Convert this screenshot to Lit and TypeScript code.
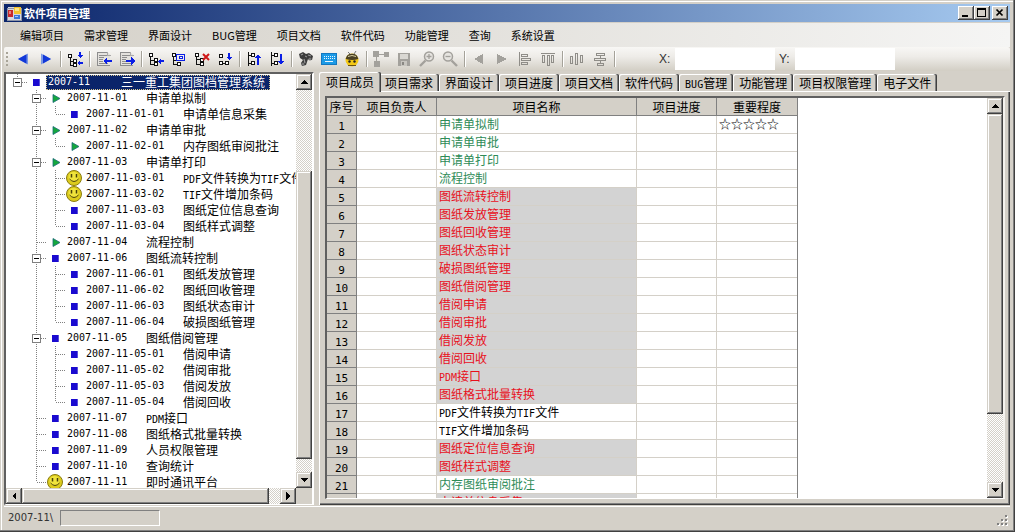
import { LitElement, html, svg, css, nothing, TemplateResult } from "lit";
import { customElement, state } from "lit/decorators.js";
import { classMap } from "lit/directives/class-map.js";
import { styleMap } from "lit/directives/style-map.js";

type Mark = "square" | "arrow" | "smiley";

interface TreeItem {
  code: string;
  name: string;
  mark: Mark;
  children?: TreeItem[];
}

const leaf = (code: string, name: string, mark: Mark = "square"): TreeItem => ({ code, name, mark });

const TREE: TreeItem = {
  code: "2007-11", name: "三一重工集团图档管理系统", mark: "square",
  children: [
    { code: "2007-11-01", name: "申请单拟制", mark: "arrow", children: [leaf("2007-11-01-01", "申请单信息采集")] },
    { code: "2007-11-02", name: "申请单审批", mark: "arrow", children: [leaf("2007-11-02-01", "内存图纸审阅批注", "arrow")] },
    {
      code: "2007-11-03", name: "申请单打印", mark: "arrow", children: [
        leaf("2007-11-03-01", "PDF文件转换为TIF文件", "smiley"),
        leaf("2007-11-03-02", "TIF文件增加条码", "smiley"),
        leaf("2007-11-03-03", "图纸定位信息查询"),
        leaf("2007-11-03-04", "图纸样式调整"),
      ],
    },
    leaf("2007-11-04", "流程控制", "arrow"),
    {
      code: "2007-11-06", name: "图纸流转控制", mark: "square", children: [
        leaf("2007-11-06-01", "图纸发放管理"),
        leaf("2007-11-06-02", "图纸回收管理"),
        leaf("2007-11-06-03", "图纸状态审计"),
        leaf("2007-11-06-04", "破损图纸管理"),
      ],
    },
    {
      code: "2007-11-05", name: "图纸借阅管理", mark: "square", children: [
        leaf("2007-11-05-01", "借阅申请"),
        leaf("2007-11-05-02", "借阅审批"),
        leaf("2007-11-05-03", "借阅发放"),
        leaf("2007-11-05-04", "借阅回收"),
      ],
    },
    leaf("2007-11-07", "PDM接口"),
    leaf("2007-11-08", "图纸格式批量转换"),
    leaf("2007-11-09", "人员权限管理"),
    leaf("2007-11-10", "查询统计"),
    leaf("2007-11-11", "即时通讯平台", "smiley"),
  ],
};

const MENUS = ["编辑项目", "需求管理", "界面设计", "BUG管理", "项目文档", "软件代码", "功能管理", "查询", "系统设置"];

const TABS = ["项目成员", "项目需求", "界面设计", "项目进度", "项目文档", "软件代码", "BUG管理", "功能管理", "项目权限管理", "电子文件"];

type Tone = "started" | "pending" | "plain";
const ROWS: { name: string; tone: Tone; stars?: string }[] = [
  { name: "申请单拟制", tone: "started", stars: "☆☆☆☆☆" },
  { name: "申请单审批", tone: "started" },
  { name: "申请单打印", tone: "started" },
  { name: "流程控制", tone: "started" },
  { name: "图纸流转控制", tone: "pending" },
  { name: "图纸发放管理", tone: "pending" },
  { name: "图纸回收管理", tone: "pending" },
  { name: "图纸状态审计", tone: "pending" },
  { name: "破损图纸管理", tone: "pending" },
  { name: "图纸借阅管理", tone: "pending" },
  { name: "借阅申请", tone: "pending" },
  { name: "借阅审批", tone: "pending" },
  { name: "借阅发放", tone: "pending" },
  { name: "借阅回收", tone: "pending" },
  { name: "PDM接口", tone: "pending" },
  { name: "图纸格式批量转换", tone: "pending" },
  { name: "PDF文件转换为TIF文件", tone: "plain" },
  { name: "TIF文件增加条码", tone: "plain" },
  { name: "图纸定位信息查询", tone: "pending" },
  { name: "图纸样式调整", tone: "pending" },
  { name: "内存图纸审阅批注", tone: "started" },
  { name: "申请单信息采集", tone: "pending" },
];

// Latin runs are set in a half-width face so that they keep the grid of the Chinese text.
const mixed = (text: string) =>
  text.split(/([A-Za-z0-9-]+)/).filter(Boolean)
    .map((part) => (/^[A-Za-z0-9-]/.test(part) ? html`<span class="half">${part}</span>` : part));

/* ---------- icons ---------- */

const BLUE = "#0a1ee6";
const box = (x: number, y: number, c = "#111") =>
  svg`<rect x=${x + 0.5} y=${y + 0.5} width="3" height="3" fill="#fff" stroke=${c}/>`;
const arrowLeft = (x: number, y: number) =>
  svg`<path d="M${x} ${y}l4-4v3h5v2h-5v3z" fill=${BLUE}/>`;
const arrowRight = (x: number, y: number) =>
  svg`<path d="M${x} ${y}l-4-4v3h-5v2h5v3z" fill=${BLUE}/>`;
const page = svg`
  <path d="M1 1h10l3 3v11H1z" fill="#e4e2de"/>
  <path d="M1.5 15V1.5H11M3 4.5h8M3 6.5h5M3 8.5h4M3 10.5h4M3 12.5h9M1 14.5h13" fill="none" stroke="#8d8d8d"/>
  <path d="M11.5 1v3.500h3" fill="none" stroke="#aaa"/>`;
const GREY = "#a3a19c";

const GLYPHS: Record<string, TemplateResult | ReturnType<typeof svg>> = {
  back: svg`<g shape-rendering="auto"><path d="M3 8l10-5.500v11z" fill="#7c98e4"/><path d="M3 8l8.500-4.700v9.400z" fill="#1238d8"/></g>`,
  forward: svg`<g shape-rendering="auto"><path d="M13 8L3 2.500v11z" fill="#7c98e4"/><path d="M13 8L5 3.600v8.800z" fill="#1238d8"/></g>`,
  insert: svg`<path d="M3.500 7v8M3 10.500h3M3 14.500h3" fill="none" stroke="#111"/>${box(1, 3)}${box(6, 8)}${box(6, 12)}
    <path d="M12 1h2v3h2l-3 3-3-3h2z" fill=${BLUE}/><path d="M10 12l3-3v2h3v2h-3v2z" fill=${BLUE}/>`,
  docIn: svg`${page}${arrowLeft(7, 10)}`,
  docOut: svg`${page}${arrowRight(16, 10)}`,
  addLeft: svg`<path d="M2.500 6v8M3 9.500h3M3 13.500h3" fill="none" stroke="#111"/>${box(1, 2)}${box(6, 7)}${box(6, 11)}<path d="M10 10l3-3v2h3v2h-3v3z" fill=${BLUE}/>`,
  addChild: svg`<path d="M2.500 6v7h4M3 9.500h2" fill="none" stroke="#111"/>${box(1, 2)}<rect x="5.500" y="3.500" width="8" height="6" fill="none" stroke=${BLUE}/><rect x="8.500" y="5.500" width="3" height="2" fill="#fff" stroke=${BLUE}/>${box(6, 11)}`,
  remove: svg`<path d="M2.500 6v7h4M3 8.500h7" fill="none" stroke="#111"/>${box(1, 2)}${box(6, 7)}${box(6, 11)}<path d="M9 3l6 6M15 3L9 9" stroke="#d01818" stroke-width="2" shape-rendering="auto"/>`,
  next: svg`${box(2, 3)}${box(2, 10)}<path d="M6 12.500h3" stroke="#111"/>${box(8, 10)}<path d="M11 2h2v4h2l-3 3-3-3h2z" fill=${BLUE}/>`,
  moveUp: svg`<path d="M2.500 1v14M3 4.500h3M3 12.500h3" fill="none" stroke="#111"/>${box(5, 2)}${box(5, 10)}<path d="M11 14h2V7h2l-3-4-3 4h2z" fill=${BLUE}/>`,
  moveDown: svg`<path d="M2.500 1v14M3 4.500h3M3 12.500h3" fill="none" stroke="#111"/>${box(5, 2)}${box(5, 10)}<path d="M11 3h2v7h2l-3 4-3-4h2z" fill=${BLUE}/>`,
  find: svg`<g shape-rendering="auto"><path d="M1 3l4-2 3 2 3-1 4 3-1 4-3 0-1-1-2 6-4 1-1-3 2-3-3-2z" fill="#3b3b3b"/><path d="M3 4l2-1M10 4l3 1M6 8l1 4" stroke="#999" stroke-width="1.200"/><circle cx="5" cy="13" r="1.500" fill="#777"/><circle cx="12" cy="8" r="1.500" fill="#777"/><path d="M7 5l2 1" stroke="#999"/></g>`,
  keyboard: svg`<rect x="0.500" y="2.500" width="15" height="11" rx="1" fill="#1c9ae6" stroke="#1478c0"/><path d="M3 5.500h11M3 7.500h11" stroke="#e8f6ff" stroke-dasharray="1 1"/><path d="M4 10.500h8" stroke="#e8f6ff"/>`,
  bee: svg`<g shape-rendering="auto"><path d="M4 1l2 2M12 0l-2 3" stroke="#777"/><circle cx="8" cy="9" r="6.500" fill="#f3c814"/><path d="M1.700 8a6.400 6.400 0 0 1 12.600 0q-6 2-12.600 0z" fill="#4a4025"/><path d="M4 5.500q4-2 8 0" stroke="#d8d0a0" fill="none"/><circle cx="5.500" cy="10.500" r="1.200" fill="#222"/><circle cx="10.500" cy="10.500" r="1.200" fill="#222"/><path d="M4 14.500h8" stroke="#6a5310"/></g>`,
  chart: svg`<path d="M0 0h6v6H0zM11 1h5v5h-5zM1 10h6v6H1z" fill=${GREY}/><path d="M6 3.500h5M3.500 6v4" stroke=${GREY}/>`,
  save: svg`<path d="M2 2h12v13H2z" fill=${GREY}/><path d="M4 3h8v5H4z" fill="#d9d7d2"/><path d="M5 10h6v5H5z" fill="#c8c6c0"/><path d="M6 11h2v3H6z" fill="#8a8883"/>`,
  zoomIn: svg`<g shape-rendering="auto" fill="none" stroke=${GREY}><path d="M6.500 9.500L1 15" stroke-width="2.400"/><circle cx="10" cy="5.500" r="4.500" fill="#e6e4e0" stroke-width="1.500"/><path d="M7.500 5.500h5M10 3v5" stroke-width="1.300"/></g>`,
  zoomOut: svg`<g shape-rendering="auto" fill="none" stroke=${GREY}><path d="M9.500 9.500L15 15" stroke-width="2.400"/><circle cx="6" cy="5.500" r="4.500" fill="#e6e4e0" stroke-width="1.500"/><path d="M3.500 5.500h5" stroke-width="1.300"/></g>`,
  prev: svg`<path d="M3 8l9-5v10z" fill=${GREY}/>`,
  play: svg`<path d="M13 8L3 3v10z" fill=${GREY}/>`,
  alignLeft: svg`<path d="M2.500 1v14M4.500 3.500h6v2h-6zM4.500 7.500h9v2h-9zM4.500 11.500h6v2h-6z" fill="none" stroke="#8f8d88"/>`,
  alignTop: svg`<path d="M1 2.500h14M2.500 4.500h2v7h-2zM7.500 4.500h2v10h-2zM11.500 4.500h2v7h-2z" fill="none" stroke="#8f8d88"/>`,
  spreadH: svg`<path d="M1.500 5.500h2v7h-2zM6.500 2.500h2v11h-2zM11.500 4.500h2v7h-2z" fill="none" stroke="#8f8d88"/>`,
  spreadV: svg`<path d="M4.500 2.500h8v2h-8zM2.500 7.500h11v2h-11zM5.500 12.500h6v2h-6zM8.500 5v2M8.500 10v2" fill="none" stroke="#8f8d88"/>`,
};

const glyph = (name: string) =>
  html`<svg class="glyph" viewBox="0 0 16 16" width="16" height="16" shape-rendering="crispEdges" aria-hidden="true">${GLYPHS[name]}</svg>`;

const TOOLS: [string, string][][] = [
  [["back", "后退"], ["forward", "前进"]],
  [["insert", "插入"]],
  [["docIn", "导入"], ["docOut", "导出"]],
  [["addLeft", "添加同级"], ["addChild", "添加子级"], ["remove", "删除"], ["next", "下移一级"]],
  [["moveUp", "上移"], ["moveDown", "下移"]],
  [["find", "查找"], ["keyboard", "键盘"], ["bee", "消息"]],
  [["chart", "结构图"], ["save", "保存"], ["zoomIn", "放大"], ["zoomOut", "缩小"]],
  [["prev", "上一个"], ["play", "下一个"], ["alignLeft", "左对齐"], ["alignTop", "顶端对齐"]],
  [["spreadH", "横向分布"], ["spreadV", "纵向分布"]],
];
const DISABLED_FROM = 6;

/* ---------- shared classic look ---------- */

const classic = css`
  :host {
    box-sizing: border-box;
    --face: #d4d0c8;
    --raised: inset -1px -1px #404040, inset 1px 1px #d4d0c8, inset -2px -2px #808080, inset 2px 2px #fff;
  }
  * { box-sizing: border-box; }
  button {
    margin: 0; padding: 0; border: 0; border-radius: 0;
    background: none; color: inherit; font: inherit;
  }
  .half { font-family: "DejaVu Sans Mono", monospace; font-size: 10px; }
`;

@customElement("classic-scrollbar")
class ClassicScrollbar extends LitElement {
  static properties = {
    horizontal: { type: Boolean, reflect: true },
    before: { type: Number },
    thumb: { type: Number },
    after: { type: Number },
  };
  declare horizontal: boolean;
  declare before: number;
  declare thumb: number;
  declare after: number;

  static styles = [classic, css`
    :host {
      display: flex; flex-direction: column; width: 16px; min-height: 0;
      background: conic-gradient(#fff 25%, #d4d0c8 0 50%, #fff 0 75%, #d4d0c8 0) 0 0 / 2px 2px;
    }
    :host([horizontal]) { flex-direction: row; width: auto; height: 16px; }
    .step {
      flex: none; display: grid; place-items: center; width: 16px; height: 16px;
      background: var(--face); box-shadow: var(--raised);
    }
    .thumb { background: var(--face); box-shadow: var(--raised); }
    .part { flex-basis: 0; min-width: 0; min-height: 0; }
  `];

  private arrow(d: string) {
    return html`<svg viewBox="0 0 8 8" width="8" height="8" shape-rendering="crispEdges" aria-hidden="true"><path d=${d}/></svg>`;
  }

  render() {
    const h = this.horizontal;
    return html`
      <button class="step" aria-label=${h ? "向左滚动" : "向上滚动"}>${this.arrow(h ? "M6 0v8L2 4z" : "M0 6h8L4 2z")}</button>
      <div class="part" style=${styleMap({ flexGrow: String(this.before) })}></div>
      <div class="part thumb" style=${styleMap({ flexGrow: String(this.thumb) })}></div>
      <div class="part" style=${styleMap({ flexGrow: String(this.after) })}></div>
      <button class="step" aria-label=${h ? "向右滚动" : "向下滚动"}>${this.arrow(h ? "M2 0v8l4-4z" : "M0 2h8L4 6z")}</button>`;
  }
}

@customElement("project-tree")
class ProjectTree extends LitElement {
  @state() private selected = TREE.code;
  @state() private closed = new Set<string>();

  static styles = [classic, css`
    :host {
      display: grid; grid-template: minmax(0, 1fr) 16px / minmax(0, 1fr) 16px;
      min-height: 0; background: var(--face);
      border: solid; border-width: 2px 2px 1px 2px;
      border-color: #606060 #fff #fff #606060;
    }
    .view { overflow: hidden; background: #fff; padding-left: 2px; }
    ul { margin: 0; padding: 0; list-style: none; }
    .row { display: flex; height: 16px; line-height: 16px; white-space: nowrap; }
    .cell { flex: none; width: 19px; height: 16px; }
    .cell svg { display: block; }
    .label { display: flex; height: 15px; margin-top: 1px; line-height: 14px; padding: 0 5px 0 2px; }
    .label.on { background: #0a246a; color: #fff; outline: 1px dotted #d8c890; outline-offset: -1px; }
    .code { text-align: left; }
    .code.d0 { width: 73px; }
    .code.d1 { width: 79px; }
    .code.d2 { width: 97px; }
  `];

  private guide(kind: "pass" | "tee" | "end" | "blank") {
    const d = { pass: "M9.500 0v16", tee: "M9.500 0v16M9.500 8.500H19", end: "M9.500 0v8M9.500 8.500H19", blank: "" }[kind];
    return html`<span class="cell"><svg width="19" height="16" shape-rendering="crispEdges" aria-hidden="true">
      <path d=${d} fill="none" stroke="#808080" stroke-dasharray="1 1"/></svg></span>`;
  }

  private toggler(item: TreeItem, kind: "tee" | "end", root: boolean) {
    const shut = this.closed.has(item.code);
    const lines = root ? "M9.500 0v4M14 8.500h5" : kind === "tee" ? "M9.500 0v16M14 8.500h5" : "M9.500 0v8M14 8.500h5";
    return html`<button class="cell" aria-label=${shut ? "展开" : "折叠"} @click=${() => this.toggle(item.code)}>
      <svg width="19" height="16" shape-rendering="crispEdges" aria-hidden="true">
        <path d=${lines} fill="none" stroke="#808080" stroke-dasharray="1 1"/>
        <rect x="5.500" y="4.500" width="8" height="8" fill="#fff" stroke="#808080"/>
        <path d=${shut ? "M7 8.500h5M9.500 6v5" : "M7 8.500h5"} stroke="#000"/>
      </svg></button>`;
  }

  private toggle(code: string) {
    const next = new Set(this.closed);
    next.has(code) ? next.delete(code) : next.add(code);
    this.closed = next;
  }

  private mark(mark: Mark) {
    const shape =
      mark === "square" ? svg`<rect x="6" y="5" width="7" height="7" fill="#1a0ad0"/><path d="M12.500 5v7" stroke="#5a50d8"/>`
      : mark === "arrow" ? svg`<path d="M7 4.500l7 4-7 4z" fill="#14a83c" stroke="#1d6a78" stroke-width=".8"/>`
      : svg`<circle cx="9" cy="8" r="7.500" fill="#dccb1c" stroke="#8a7c10"/><circle cx="8.500" cy="7" r="5" fill="#f0e43c"/>
          <path d="M6.500 4v3.500M11.500 4v3.500" stroke="#4a4208" stroke-width="1.500"/><path d="M4.500 9q4.500 5 9 0" fill="none" stroke="#4a4208"/>`;
    return html`<span class="cell"><svg width="19" height="16" aria-hidden="true">${shape}</svg></span>`;
  }

  private node(item: TreeItem, depth: number, last: boolean, parentLast: boolean): TemplateResult {
    const kind = last ? "end" : "tee";
    const open = !!item.children && !this.closed.has(item.code);
    return html`
      <li role="treeitem" aria-expanded=${item.children ? String(open) : nothing}>
        <div class="row">
          ${depth > 0 ? this.guide("blank") : nothing}
          ${depth > 1 ? this.guide(parentLast ? "blank" : "pass") : nothing}
          ${item.children ? this.toggler(item, kind, depth === 0) : this.guide(kind)}
          ${this.mark(item.mark)}
          <button class=${classMap({ label: true, on: this.selected === item.code })} @click=${() => (this.selected = item.code)}>
            <span class=${`code half d${depth}`}>${item.code}</span><span>${mixed(item.name)}</span>
          </button>
        </div>
        ${open
          ? html`<ul role="group">${item.children!.map((c, i, all) => this.node(c, depth + 1, i === all.length - 1, last))}</ul>`
          : nothing}
      </li>`;
  }

  render() {
    return html`
      <div class="view"><ul role="tree">${this.node(TREE, 0, true, true)}</ul></div>
      <classic-scrollbar .before=${81} .thumb=${288} .after=${13}></classic-scrollbar>
      <classic-scrollbar horizontal .before=${0} .thumb=${247} .after=${11}></classic-scrollbar>`;
  }
}

@customElement("member-grid")
class MemberGrid extends LitElement {
  static styles = [classic, css`
    :host {
      display: grid; grid-template-columns: minmax(0, 1fr) 16px; min-height: 0; background: #fff;
      border: solid; border-width: 2px 2px 1px 2px; border-color: #606060 #f4f2ee #fff #606060;
    }
    .view { overflow: hidden; }
    table { border-collapse: separate; border-spacing: 0; table-layout: fixed; width: 470px; border-right: 1px solid #808080; }
    .no { width: 30px; }
    .mid { width: 80px; }
    .wide { width: 200px; }
    th, td {
      height: 18px; padding: 0 0 0 2px; line-height: 16px; overflow: hidden; white-space: nowrap;
      font-weight: normal; text-align: left; vertical-align: top;
      border: solid #d4d0c8; border-width: 0 1px 1px 0;
    }
    th { background: var(--face); border-color: #808080; text-align: center; padding: 0; vertical-align: middle; }
    th:last-child, td:last-child { border-right: 0; }
    .half { line-height: 10px; }
    th .half { font-size: 11px; }
    .started { color: #2e8b57; }
    .pending { color: #e8101c; background: #d3d3d3; }
  `];

  render() {
    return html`
      <div class="view">
        <table>
          <colgroup><col class="no"><col class="mid"><col class="wide"><col class="mid"><col class="mid"></colgroup>
          <thead><tr>${["序号", "项目负责人", "项目名称", "项目进度", "重要程度"].map((t) => html`<th scope="col">${t}</th>`)}</tr></thead>
          <tbody>
            ${ROWS.map((r, i) => html`
              <tr>
                <th scope="row">${mixed(String(i + 1))}</th>
                <td></td>
                <td class=${r.tone}>${mixed(r.name)}</td>
                <td></td>
                <td>${r.stars ?? ""}</td>
              </tr>`)}
          </tbody>
        </table>
      </div>
      <classic-scrollbar .before=${0} .thumb=${298} .after=${68}></classic-scrollbar>`;
  }
}

@customElement("app-root")
class AppRoot extends LitElement {
  @state() private tab = TABS[0];

  static styles = [classic, css`
    :host {
      display: grid; grid-template-rows: 19px 24px 24px minmax(0, 1fr) 23px;
      height: 100vh; padding: 4px 5px 3px 4px; background: var(--face); color: #000;
      box-shadow: inset -1px -1px #404040, inset -2px -2px #808080, inset 1px 1px #d4d0c8, inset 2px 2px #fff;
      font: 12px/16px "Noto Sans CJK SC", "Noto Sans", sans-serif;
    }
    .title {
      display: flex; align-items: center; margin-bottom: 1px; padding: 0 2px 0 3px;
      background: linear-gradient(90deg, #0a246a, #a6caf0); color: #fff;
    }
    .title h1 { flex: 1; margin: 0 0 0 2px; font-size: 11px; font-weight: 700; line-height: 18px; }
    .caption { display: grid; place-items: center; width: 16px; height: 14px; background: var(--face);
      box-shadow: inset -1px -1px #404040, inset 1px 1px #fff, inset -2px -2px #808080; }
    .caption:last-child { margin-left: 2px; }
    .menu {
      display: flex; align-items: center; padding-left: 6px; font-size: 11px;
      background: linear-gradient(90deg, #d4d0c8, #f5f5f4);
    }
    .menu button { padding: 0 10px; line-height: 22px; }
    .tools {
      display: flex; align-items: center; padding-left: 1px; min-width: 0;
      border-radius: 2px;
      background: linear-gradient(#f8f7f5, #eeece8 40%, #d2cec4);
    }
    .grip { flex: none; width: 6px; height: 16px;
      background: radial-gradient(circle at 1px 1px, #a8a498 1px, transparent 1px) 1px 1px / 6px 4px repeat-y; }
    .tool { display: grid; place-items: center; width: 23px; height: 22px; }
    .sep { flex: none; width: 6px; height: 16px;
      background: linear-gradient(90deg, transparent 3px, #a5a299 3px 4px, #fff 4px 5px, transparent 5px); }
    .field { display: flex; align-items: center; gap: 5px; margin-left: 4px; font-family: "Liberation Sans", sans-serif; color: #333; }
    .field.first { margin-left: 42px; }
    .field label { width: 11px; }
    .field input { width: 100px; height: 22px; padding: 0 2px; border: 0; border-radius: 0; background: #fff; font: inherit; }
    .main { display: grid; grid-template-columns: 310px minmax(0, 1fr); column-gap: 5px; min-height: 0; padding: 1px 0; }
    .right { display: flex; flex-direction: column; min-width: 0; min-height: 0; }
    .tabs { display: flex; align-items: flex-end; height: 19px; }
    .tabs button {
      height: 17px; padding: 0 6px; line-height: 17px; background: var(--face); border-radius: 2px 2px 0 0;
      box-shadow: inset -1px 0 #404040, inset -2px 0 #808080, inset 1px 1px #fff; white-space: nowrap;
    }
    .tabs .on { position: relative; height: 20px; margin: 0 -2px -1px 0; padding: 0 7px 1px; line-height: 19px; }
    .page {
      flex: 1; display: grid; min-height: 0; padding: 5px 5px 6px 6px; background: var(--face);
      box-shadow: inset 1px 1px #fff, inset -1px -1px #404040, inset -2px -2px #808080;
    }
    .status { display: flex; align-items: center; gap: 6px; padding: 0 1px 0 4px; border-top: 1px solid #fff; font-size: 11px; color: #333; }
    .path { font-family: "DejaVu Sans", sans-serif; font-size: 10px; min-width: 46px; }
    progress {
      appearance: none; width: 100px; height: 16px; background: var(--face);
      border: 1px solid; border-color: #808080 #fff #fff #808080;
    }
    progress::-webkit-progress-bar { background: transparent; }
    .size { margin-left: auto; align-self: flex-end; margin-bottom: 2px; }
    svg { display: block; }
  `];

  render() {
    return html`
      <header class="title">
        <svg width="15" height="15" viewBox="0 0 15 15" shape-rendering="crispEdges" aria-hidden="true">
          <path d="M1 1h13v13H1z" fill="#d8d8e0"/><path d="M.5 2.500h14v12H.5z" fill="none" stroke="#8c94a8"/>
          <path d="M1 4h5v7H1z" fill="#c8282c"/><path d="M2 5h2v3H2z" fill="#e88080"/>
          <path d="M7 1h7v7H7z" fill="#f4c430"/><path d="M8 2h4v3H8z" fill="#fbe48c"/>
          <path d="M7 9h6v4H7z" fill="#3c78d8"/><path d="M8 10h3v1H8z" fill="#a8c8f8"/>
        </svg>
        <h1>软件项目管理</h1>
        <button class="caption" aria-label="最小化"><svg width="16" height="14" shape-rendering="crispEdges"><path d="M4 9h6v2H4z"/></svg></button>
        <button class="caption" aria-label="最大化"><svg width="16" height="14" shape-rendering="crispEdges"><path d="M3 2h9v9H3zM4 4v6h7V4z" fill-rule="evenodd"/></svg></button>
        <button class="caption" aria-label="关闭"><svg width="16" height="14"><path d="M4.500 3.500l6 6M10.500 3.500l-6 6" stroke="#000" stroke-width="1.700"/></svg></button>
      </header>
      <nav class="menu">${MENUS.map((m) => html`<button>${m}</button>`)}</nav>
      <div class="tools" role="toolbar">
        <span class="grip"></span>
        ${TOOLS.map((group, g) => html`
          ${group.map(([name, label]) => html`<button class="tool" aria-label=${label} ?disabled=${g >= DISABLED_FROM}>${glyph(name)}</button>`)}
          <span class="sep"></span>`)}
        <div class="field first"><label for="pos-x">X:</label><input id="pos-x" type="text"></div>
        <div class="field"><label for="pos-y">Y:</label><input id="pos-y" type="text"></div>
      </div>
      <main class="main">
        <project-tree></project-tree>
        <section class="right">
          <div class="tabs" role="tablist">
            ${TABS.map((t) => html`<button role="tab" aria-selected=${String(t === this.tab)} class=${classMap({ on: t === this.tab })}
              @click=${() => (this.tab = t)}>${mixed(t)}</button>`)}
          </div>
          <div class="page" role="tabpanel"><member-grid></member-grid></div>
        </section>
      </main>
      <footer class="status">
        <span class="path">2007-11\\</span>
        <progress value="0" max="100" aria-label="进度"></progress>
        <svg class="size" width="12" height="12" shape-rendering="crispEdges" aria-hidden="true">
          <path d="M9 1h2v2H9zM5 5h2v2H5zM9 5h2v2H9zM1 9h2v2H1zM5 9h2v2H5zM9 9h2v2H9z" fill="#fff"/>
          <path d="M8 0h2v2H8zM4 4h2v2H4zM8 4h2v2H8zM0 8h2v2H0zM4 8h2v2H4zM8 8h2v2H8z" fill="#808080"/>
        </svg>
      </footer>`;
  }
}
